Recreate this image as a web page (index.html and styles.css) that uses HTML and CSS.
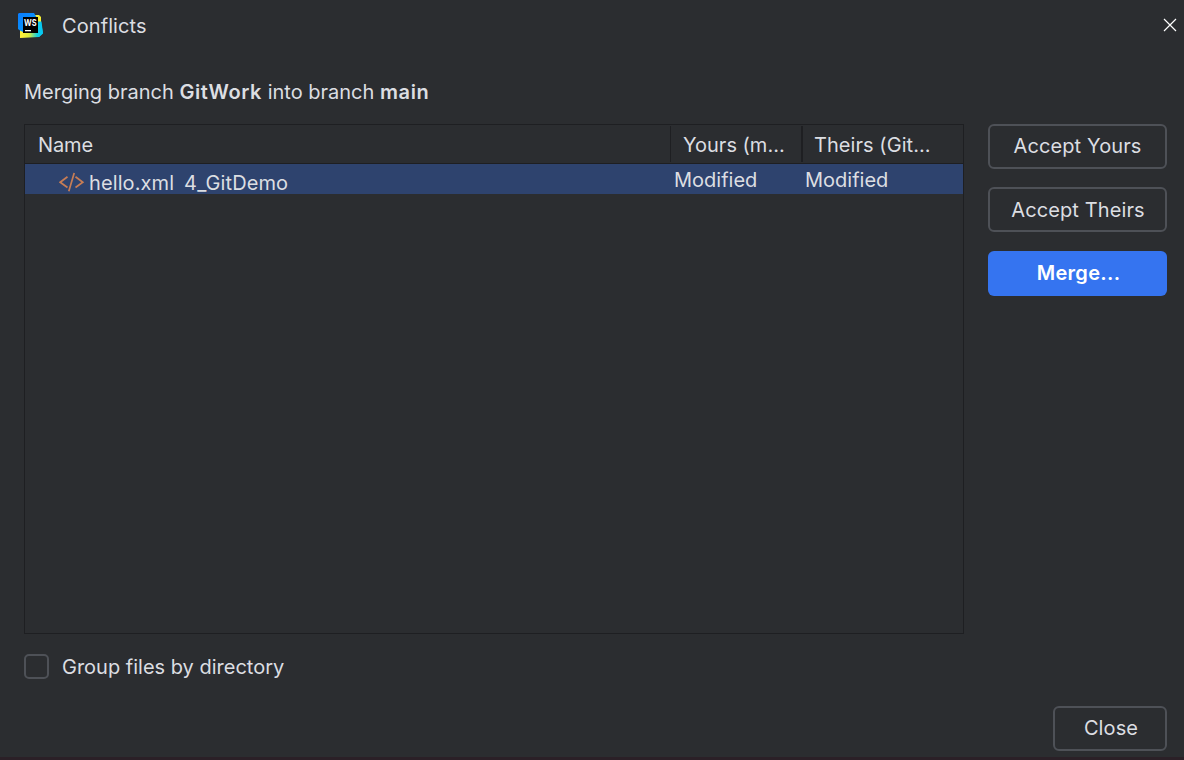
FILE: index.html
```
<!DOCTYPE html>
<html lang="en">
<head>
<meta charset="utf-8">
<title>Conflicts</title>
<link rel="stylesheet" href="styles.css">
</head>
<body>
<div class="dialog">
  <header class="titlebar">
    <svg class="logo" width="26" height="26" viewBox="0 0 26 26">
      <defs>
        <linearGradient id="blue" x1="0" y1="0" x2="1" y2="1"><stop offset="0" stop-color="#0a7cff"/><stop offset="1" stop-color="#07a0f5"/></linearGradient>
        <linearGradient id="low" x1="0" y1="0" x2="1" y2="0"><stop offset="0.1" stop-color="#fcf03a"/><stop offset="0.4" stop-color="#d8ea3c"/><stop offset="0.75" stop-color="#10cfe0"/></linearGradient>
      </defs>
      <path d="M14 2h7l2 2v6H14z" fill="#f6ef35"/>
      <path d="M2 17h17V9.500h4L25 20l-4 4L2 25z" fill="url(#low)"/>
      <path d="M20 8.500h3.500L25 20.500l-4 3.500z" fill="#08c8f0"/>
      <path d="M0 1l1-1h15l3 5-14 14-3-1.500L0 16z" fill="url(#blue)"/>
      <path d="M5 4h15v16H5z" fill="#000"/>
      <path d="M7 17h6v1.300H7z" fill="#fff"/>
      <text class="logo-text" x="6" y="12.500" textLength="12.500" lengthAdjust="spacingAndGlyphs">WS</text>
    </svg>
    <h1 class="title">Conflicts</h1>
    <button class="dismiss" aria-label="Close dialog">
      <svg width="14" height="14" viewBox="0 0 14 14"><path d="M1 1l12 12M13 1L1 13" stroke="#fff" stroke-width="1.200"/></svg>
    </button>
  </header>
  <p class="message">Merging branch <b>GitWork</b> into branch <b>main</b></p>
  <main class="content">
    <section class="table">
      <div class="row head">
        <span class="cell name">Name</span>
        <span class="cell yours">Yours (m...</span>
        <span class="cell theirs">Theirs (Git...</span>
      </div>
      <div class="row file">
        <span class="cell name">
          <svg class="xml" width="26" height="20" viewBox="0 0 26 20"><path d="M8.500 4.800L1.200 10.200L8.500 15.500M16.500 4.800L23.800 10.200L16.500 15.500M15.200 1L9.800 19.200" fill="none" stroke="#c77d55" stroke-width="1.700"/></svg>
          <span class="filename">hello.xml</span><span class="directory">4_GitDemo</span>
        </span>
        <span class="cell yours">Modified</span>
        <span class="cell theirs">Modified</span>
      </div>
    </section>
    <aside class="actions">
      <button class="button">Accept Yours</button>
      <button class="button accept-theirs">Accept Theirs</button>
      <button class="button primary">Merge...</button>
    </aside>
  </main>
  <label class="option"><span class="checkbox"></span><span class="option-text">Group files by directory</span></label>
  <footer class="footer"><button class="button close">Close</button></footer>
</div>
</body>
</html>
```
FILE: styles.css
```
* { box-sizing: border-box; }
body {
  margin: 0;
  font: 400 20px/24px Inter, "Open Sans", sans-serif;
  color: #dcdee2;
  background: #2b2d30;
}
button { font: inherit; color: inherit; background: none; }
.dialog {
  display: flex;
  flex-direction: column;
  width: 1184px;
  height: 760px;
  border-bottom: 3px solid #2b2027;
  overflow: hidden;
}
.titlebar { display: flex; align-items: center; height: 51px; padding: 0 7px 0 18px; }
.title { margin: 1px auto 0 18px; font-size: 20px; font-weight: 400; letter-spacing: 0.08px; }
.logo-text { font: 700 9px Inter, sans-serif; fill: #fff; letter-spacing: 0; }
.dismiss { display: flex; margin-top: -1px; padding: 0; border: 0; }
.message { margin: 29px 0 0 24px; letter-spacing: 0; }
.message b { font-weight: 500; letter-spacing: 0.6px; font-weight: 600; letter-spacing: 0.6px; }
.content { display: flex; gap: 24px; height: 510px; margin: 20px 17px 0 24px; }
.table { width: 940px; border: 1px solid #1e1f22; }
.row { display: flex; }
.head { height: 39px; line-height: 41px; border-bottom: 1px solid #1e1f22; letter-spacing: -0.1px; }
.cell { white-space: pre; }
.name { width: 645px; }
.yours { width: 131px; }
.theirs { flex: 1; }
.head .name { padding-left: 13px; }
.head .yours, .head .theirs { height: 36px; margin-top: 1px; line-height: 39px; padding-left: 12px; border-left: 1px solid #1e1f22; letter-spacing: 0; }
.head .theirs { padding-left: 11px; border-left-width: 2px; letter-spacing: 0.06px; }
.file { height: 30px; background: #2e436e; line-height: 33px; }
.file .name { display: flex; padding: 3px 0 0 34px; }
.file .yours, .file .theirs { padding-left: 4px; }
.xml { margin-top: 5px; }
.filename { margin-left: 4px; letter-spacing: 0.1px; }
.directory { margin-left: 10px; letter-spacing: 0.1px; }
.actions { display: flex; flex-direction: column; gap: 18.500px; margin-top: -0.500px; }
.button {
  width: 179px;
  height: 45px;
  padding: 0 0 1px;
  border: 2px solid #4e5157;
  border-radius: 6px;
  letter-spacing: 0.1px;
}
.accept-theirs { padding: 0 0 0 1px; }
.primary { border: 0; padding: 0 0 0 2px; background: #3574f0; color: #fff; font-weight: 600; letter-spacing: 0.3px; }
.option { display: flex; align-items: center; gap: 13px; height: 25px; margin: 20px 0 0 24px; }
.checkbox { width: 25px; height: 25px; border: 2px solid #4e5157; border-radius: 5px; }
.footer { display: flex; justify-content: flex-end; margin: 27px 17px 0 0; }
.close { width: 114px; padding-left: 2px; }
```
